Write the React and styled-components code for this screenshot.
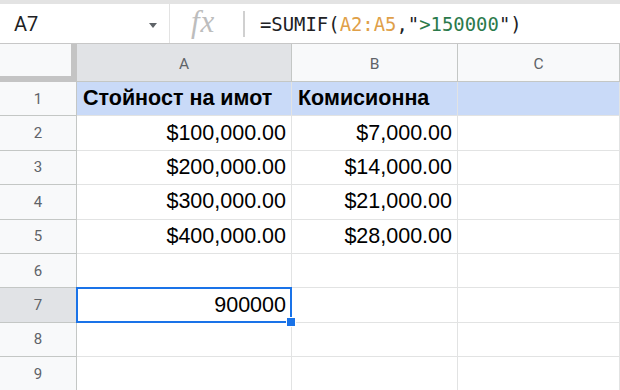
import React from "react";
import styled, { createGlobalStyle } from "styled-components";

const Global = createGlobalStyle`
body{
  margin:0;
  background:#fff;
  font-family:"Liberation Sans", Arial, sans-serif;
}
`;

const Page = styled.div`
width:620px;
height:390px;
overflow:hidden;
background:#fff;
`;

const FormulaBar = styled.div`
height:44px;
box-sizing:border-box;
border-top:4px solid #e3e3e3;
border-bottom:1px solid #c7c7c7;
display:flex;
align-items:center;
`;

const NameBox = styled.div`
width:170px;
height:100%;
box-sizing:border-box;
border-right:1px solid #e3e3e3;
display:flex;
align-items:center;
justify-content:space-between;
padding:0 12px 0 14px;
font-family:Roboto, "Liberation Sans", sans-serif;
font-size:20px;
color:#202124;
`;

const Caret = styled.span`
width:0;
height:0;
border-left:4.5px solid transparent;
border-right:4.5px solid transparent;
border-top:5px solid #5f6368;
margin-top:3px;
`;

const Fx = styled.div`
width:52px;
padding-left:21px;
font-family:"Liberation Serif", serif;
font-style:italic;
font-size:31px;
color:#bdbdbd;
letter-spacing:1px;
margin-top:-4px;
`;

const Divider = styled.div`
width:2px;
height:26px;
background:#d0d0d0;
margin-right:15px;
`;

const Formula = styled.div`
font-family:"DejaVu Sans Mono", monospace;
font-size:18.9px;
color:#202124;
white-space:pre;
`;

const Tok = styled.span`
color:${p => p.$c};
`;

const Grid = styled.div`
display:grid;
grid-template-columns:77px 215px 166px 162px;
grid-template-rows:38px repeat(9, 34.4px);
`;

const Corner = styled.div`
background:#f8f9fa;
box-sizing:border-box;
border-right:6px solid #c4c4c4;
border-bottom:6px solid #c4c4c4;
`;

const ColHead = styled.div`
background:${p => (p.$active ? "#e1e3e6" : "#f8f9fa")};
box-sizing:border-box;
border-right:1px solid #c4c7c5;
border-bottom:1px solid #c4c7c5;
display:flex;
align-items:center;
justify-content:center;
font-family:Roboto, "Liberation Sans", sans-serif;
font-size:15.5px;
color:#5f6368;
padding-top:3px;
`;

const RowHead = styled.div`
background:${p => (p.$active ? "#e1e3e6" : "#f8f9fa")};
box-sizing:border-box;
border-right:1px solid #c4c7c5;
border-bottom:1px solid #c4c7c5;
display:flex;
align-items:center;
justify-content:center;
font-family:Roboto, "Liberation Sans", sans-serif;
font-size:15px;
color:#5f6368;
`;

const Cell = styled.div`
position:relative;
z-index:${p => (p.$sel ? 2 : "auto")};
background:${p => (p.$head ? "#c9daf8" : "#fff")};
box-sizing:border-box;
border-right:1px solid #e2e3e3;
border-bottom:1px solid #e2e3e3;
display:flex;
align-items:center;
justify-content:${p => (p.$num ? "flex-end" : "flex-start")};
padding:0 5px 0 6px;
font-size:21.5px;
font-weight:${p => (p.$head ? 700 : 400)};
color:#000;
white-space:nowrap;
`;

const Selection = styled.div`
position:absolute;
left:-1px;
top:-1px;
right:-1px;
bottom:-1px;
border:2px solid #1a73e8;
pointer-events:none;
`;

const Handle = styled.div`
position:absolute;
right:-6px;
bottom:-6px;
width:8px;
height:8px;
background:#1a73e8;
border:1px solid #fff;
`;

const rows = [
  ["Стойност на имот", "Комисионна"],
  ["$100,000.00", "$7,000.00"],
  ["$200,000.00", "$14,000.00"],
  ["$300,000.00", "$21,000.00"],
  ["$400,000.00", "$28,000.00"],
  ["", ""],
  ["900000", ""],
  ["", ""],
  ["", ""],
];

export default function App() {
  return (
    <Page>
      <Global />
      <FormulaBar>
        <NameBox>
          A7
          <Caret />
        </NameBox>
        <Fx>fx</Fx>
        <Divider />
        <Formula>
          =SUMIF(<Tok $c="#e0a048">A2:A5</Tok>,"<Tok $c="#2b7a4b">&gt;150000</Tok>")
        </Formula>
      </FormulaBar>
      <Grid>
        <Corner />
        <ColHead $active>A</ColHead>
        <ColHead>B</ColHead>
        <ColHead>C</ColHead>
        {rows.map((r, i) => {
          const head = i === 0;
          const sel = i === 6;
          return (
            <React.Fragment key={i}>
              <RowHead $active={sel}>{i + 1}</RowHead>
              <Cell $head={head} $num={!head} $sel={sel}>
                {r[0]}
                {sel && (
                  <Selection>
                    <Handle />
                  </Selection>
                )}
              </Cell>
              <Cell $head={head} $num={!head}>{r[1]}</Cell>
              <Cell $head={head} />
            </React.Fragment>
          );
        })}
      </Grid>
    </Page>
  );
}
